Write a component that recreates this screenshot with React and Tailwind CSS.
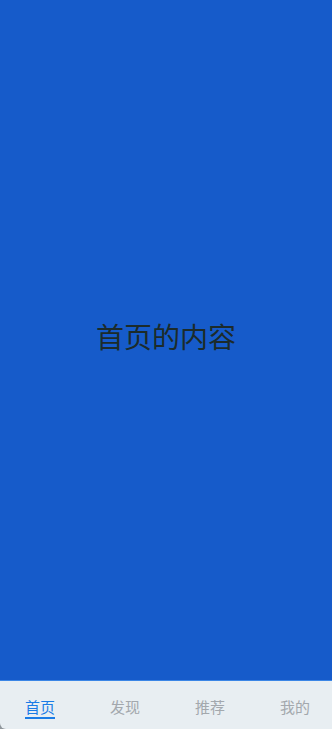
import React, { useState } from "react";

const TABS = ["首页", "发现", "推荐", "我的"];

const App = () => {
  const [active, setActive] = useState(0);

  return (
    <div
      className="w-[332px] h-[729px] flex flex-col bg-[#8f969c]"
      style={{ fontFamily: '"Noto Sans CJK SC", "Noto Sans", sans-serif' }}
    >
      <main className="flex-1 bg-[#165bca] flex items-center justify-center">
        <p className="text-[28px] text-[#1c2b2a] -mt-[8px]">
          {TABS[active]}的内容
        </p>
      </main>
      <nav className="h-[49px] bg-[#e8eef2] border-t border-[#3b86e6] rounded-bl-[6px] flex items-start pl-[25px] gap-[55px] pt-[17px]">
        {TABS.map((tab, i) => (
          <button
            key={tab}
            onClick={() => setActive(i)}
            className={
              i === active
                ? "text-[15px] leading-[18px] text-[#1a7ce6] border-b-2 border-[#1a7ce6] pb-[1px]"
                : "text-[15px] leading-[18px] text-[#a3a8ad] pb-[3px]"
            }
          >
            {tab}
          </button>
        ))}
      </nav>
    </div>
  );
};

export default App;
